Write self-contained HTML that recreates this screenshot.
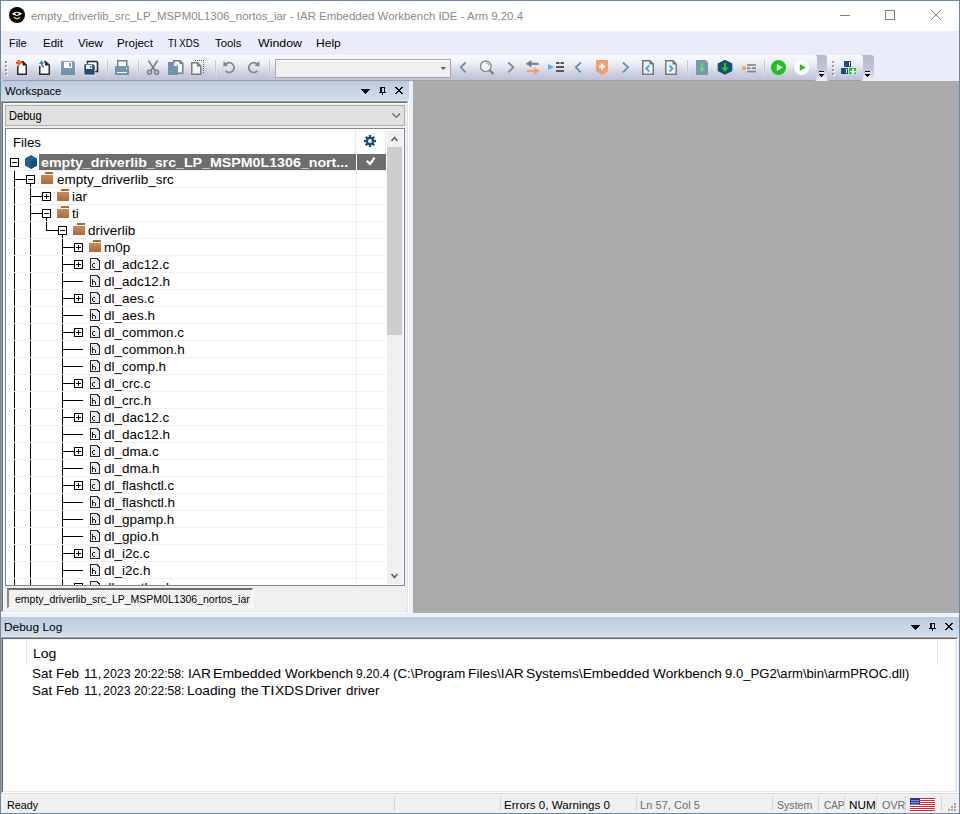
<!DOCTYPE html><html><head><meta charset="utf-8"><style>
html,body{margin:0;padding:0;width:960px;height:814px;overflow:hidden;position:relative;font-family:"Liberation Sans",sans-serif}
div{position:absolute}
.t{white-space:nowrap;line-height:normal}
body>svg{position:absolute;left:0;top:0}
</style></head><body>
<div style="left:0px;top:0px;width:960px;height:814px;background:#6b88a5"></div>
<div style="left:1px;top:1px;width:958px;height:30px;background:#ffffff"></div>
<div style="left:1px;top:31px;width:958px;height:50px;background:#eaedf9"></div>
<div style="left:1px;top:81px;width:958px;height:732px;background:#eef0fa"></div>
<div class="t" style="left:30.50px;top:9.59px;font-size:11.5px;color:#8a8a8a;font-weight:normal;letter-spacing:0px;transform:scaleX(0.9949);transform-origin:0 0;">empty_driverlib_src_LP_MSPM0L1306_nortos_iar - IAR Embedded Workbench IDE - Arm 9.20.4</div>
<div class="t" style="left:9.29px;top:36.59px;font-size:11.5px;color:#000;font-weight:normal;letter-spacing:0px;transform:scaleX(0.9493);transform-origin:0 0;">File</div>
<div class="t" style="left:42.50px;top:36.59px;font-size:11.5px;color:#000;font-weight:normal;letter-spacing:0px;transform:scaleX(1.0013);transform-origin:0 0;">Edit</div>
<div class="t" style="left:78.42px;top:36.59px;font-size:11.5px;color:#000;font-weight:normal;letter-spacing:0px;transform:scaleX(1.0017);transform-origin:0 0;">View</div>
<div class="t" style="left:117.10px;top:36.59px;font-size:11.5px;color:#000;font-weight:normal;letter-spacing:0px;transform:scaleX(1.0009);transform-origin:0 0;">Project</div>
<div class="t" style="left:168.25px;top:36.59px;font-size:11.5px;color:#000;font-weight:normal;letter-spacing:0px;transform:scaleX(0.8387);transform-origin:0 0;">TI XDS</div>
<div class="t" style="left:215.19px;top:36.59px;font-size:11.5px;color:#000;font-weight:normal;letter-spacing:0px;transform:scaleX(0.9816);transform-origin:0 0;">Tools</div>
<div class="t" style="left:257.88px;top:36.59px;font-size:11.5px;color:#000;font-weight:normal;letter-spacing:0px;transform:scaleX(1.0736);transform-origin:0 0;">Window</div>
<div class="t" style="left:316.23px;top:36.59px;font-size:11.5px;color:#000;font-weight:normal;letter-spacing:0px;transform:scaleX(1.0464);transform-origin:0 0;">Help</div>
<div style="left:812px;top:55px;width:15px;height:26px;background:linear-gradient(#b5b8cc,#c3c6d8 55%,#d9dbe7 80%,#eceef5 95%);border-radius:0 3px 3px 0"></div>
<div style="left:1px;top:55px;width:816px;height:26px;background:linear-gradient(#fafbfe,#eff1f8 30%,#cdd0e1 70%,#bfc2d5 96%,#9a9db4 96%);border-radius:3px"></div>
<div style="left:859px;top:55px;width:15px;height:26px;background:linear-gradient(#b5b8cc,#c3c6d8 55%,#d9dbe7 80%,#eceef5 95%);border-radius:0 3px 3px 0"></div>
<div style="left:827px;top:55px;width:36px;height:26px;background:linear-gradient(#fafbfe,#eff1f8 30%,#cdd0e1 70%,#bfc2d5 96%,#9a9db4 96%);border-radius:3px"></div>
<div style="left:1px;top:81px;width:408px;height:20px;background:linear-gradient(#bccbdc,#d3dfec)"></div>
<div class="t" style="left:5.47px;top:84.59px;font-size:11.5px;color:#000;font-weight:normal;letter-spacing:0px;transform:scaleX(0.9835);transform-origin:0 0;">Workspace</div>
<div style="left:1px;top:103px;width:407px;height:509px;background:#f0f0f0"></div>
<div style="left:5px;top:105px;width:400px;height:21px;background:#e1e1e1;border:1px solid #adadad;box-sizing:border-box"></div>
<div class="t" style="left:8.57px;top:108.23px;font-size:13px;color:#000;font-weight:normal;letter-spacing:0px;transform:scaleX(0.8523);transform-origin:0 0;">Debug</div>
<div style="left:5px;top:128px;width:400px;height:458px;background:#fff;border:1px solid #7d8894;box-sizing:border-box"></div>
<div style="left:6px;top:129px;width:398px;height:456px;overflow:hidden"><svg width="398" height="456" style="position:absolute;left:0;top:0"><defs><linearGradient id="fold" x1="0" y1="0" x2="0" y2="1"><stop offset="0" stop-color="#c98d5c"/><stop offset="1" stop-color="#a9693d"/></linearGradient></defs><g transform="translate(-6,-129)"><rect x="39" y="154" width="317" height="16" fill="#6e6e6e"/><rect x="357" y="154" width="29" height="16" fill="#6e6e6e"/><rect x="14" y="171" width="1" height="414" fill="#000"/><rect x="30" y="184" width="1" height="401" fill="#000"/><rect x="46" y="218" width="1" height="13" fill="#000"/><rect x="62" y="235" width="1" height="350" fill="#000"/><rect x="10.5" y="158.5" width="8" height="8" fill="#fff" stroke="#000" stroke-width="1"/><rect x="12" y="162" width="5" height="1" fill="#000"/><g transform="translate(25,155)"><path d="M6 0 L12 3.5 L12 10.5 L6 14 L0 10.5 L0 3.5 Z" fill="#245f8c"/><path d="M6 7 L12 3.5 L12 10.5 L6 14 Z" fill="#1b4b70"/></g><rect x="14" y="179" width="12" height="1" fill="#000"/><rect x="26.5" y="175.5" width="8" height="8" fill="#fff" stroke="#000" stroke-width="1"/><rect x="28" y="179" width="5" height="1" fill="#000"/><g transform="translate(41,172)"><rect x="4" y="0" width="8" height="2" fill="#b5672f"/><rect x="0" y="3" width="12" height="9" fill="url(#fold)"/></g><rect x="30" y="196" width="12" height="1" fill="#000"/><rect x="42.5" y="192.5" width="8" height="8" fill="#fff" stroke="#000" stroke-width="1"/><rect x="44" y="196" width="5" height="1" fill="#000"/><rect x="46" y="194" width="1" height="5" fill="#000"/><g transform="translate(57,189)"><rect x="4" y="0" width="8" height="2" fill="#b5672f"/><rect x="0" y="3" width="12" height="9" fill="url(#fold)"/></g><rect x="30" y="213" width="12" height="1" fill="#000"/><rect x="42.5" y="209.5" width="8" height="8" fill="#fff" stroke="#000" stroke-width="1"/><rect x="44" y="213" width="5" height="1" fill="#000"/><g transform="translate(57,206)"><rect x="4" y="0" width="8" height="2" fill="#b5672f"/><rect x="0" y="3" width="12" height="9" fill="url(#fold)"/></g><rect x="46" y="230" width="12" height="1" fill="#000"/><rect x="58.5" y="226.5" width="8" height="8" fill="#fff" stroke="#000" stroke-width="1"/><rect x="60" y="230" width="5" height="1" fill="#000"/><g transform="translate(73,223)"><rect x="4" y="0" width="8" height="2" fill="#b5672f"/><rect x="0" y="3" width="12" height="9" fill="url(#fold)"/></g><rect x="62" y="247" width="12" height="1" fill="#000"/><rect x="74.5" y="243.5" width="8" height="8" fill="#fff" stroke="#000" stroke-width="1"/><rect x="76" y="247" width="5" height="1" fill="#000"/><rect x="78" y="245" width="1" height="5" fill="#000"/><g transform="translate(89,240)"><rect x="4" y="0" width="8" height="2" fill="#b5672f"/><rect x="0" y="3" width="12" height="9" fill="url(#fold)"/></g><rect x="62" y="264" width="12" height="1" fill="#000"/><rect x="74.5" y="260.5" width="8" height="8" fill="#fff" stroke="#000" stroke-width="1"/><rect x="76" y="264" width="5" height="1" fill="#000"/><rect x="78" y="262" width="1" height="5" fill="#000"/><g transform="translate(90,258)" shape-rendering="crispEdges"><rect x="1" y="1" width="8" height="10" fill="#e3edf7"/><rect x="1" y="1" width="1" height="10" fill="#f3f7fb"/><rect x="0" y="0" width="8" height="1" fill="#2a2a2a"/><rect x="0" y="0" width="1" height="12" fill="#2a2a2a"/><rect x="0" y="11" width="10" height="1" fill="#2a2a2a"/><rect x="9" y="2" width="1" height="10" fill="#2a2a2a"/><rect x="7" y="1" width="2" height="1" fill="#2a2a2a"/><rect x="8" y="2" width="1" height="1" fill="#2a2a2a"/><rect x="3" y="5" width="2" height="1" fill="#222"/><rect x="2" y="6" width="1" height="3" fill="#222"/><rect x="3" y="9" width="2" height="1" fill="#222"/></g><rect x="62" y="281" width="21" height="1" fill="#000"/><g transform="translate(90,275)" shape-rendering="crispEdges"><rect x="1" y="1" width="8" height="10" fill="#e3edf7"/><rect x="1" y="1" width="1" height="10" fill="#f3f7fb"/><rect x="0" y="0" width="8" height="1" fill="#2a2a2a"/><rect x="0" y="0" width="1" height="12" fill="#2a2a2a"/><rect x="0" y="11" width="10" height="1" fill="#2a2a2a"/><rect x="9" y="2" width="1" height="10" fill="#2a2a2a"/><rect x="7" y="1" width="2" height="1" fill="#2a2a2a"/><rect x="8" y="2" width="1" height="1" fill="#2a2a2a"/><rect x="2" y="4" width="1" height="6" fill="#222"/><rect x="3" y="6" width="2" height="1" fill="#222"/><rect x="5" y="7" width="1" height="3" fill="#222"/></g><rect x="62" y="298" width="12" height="1" fill="#000"/><rect x="74.5" y="294.5" width="8" height="8" fill="#fff" stroke="#000" stroke-width="1"/><rect x="76" y="298" width="5" height="1" fill="#000"/><rect x="78" y="296" width="1" height="5" fill="#000"/><g transform="translate(90,292)" shape-rendering="crispEdges"><rect x="1" y="1" width="8" height="10" fill="#e3edf7"/><rect x="1" y="1" width="1" height="10" fill="#f3f7fb"/><rect x="0" y="0" width="8" height="1" fill="#2a2a2a"/><rect x="0" y="0" width="1" height="12" fill="#2a2a2a"/><rect x="0" y="11" width="10" height="1" fill="#2a2a2a"/><rect x="9" y="2" width="1" height="10" fill="#2a2a2a"/><rect x="7" y="1" width="2" height="1" fill="#2a2a2a"/><rect x="8" y="2" width="1" height="1" fill="#2a2a2a"/><rect x="3" y="5" width="2" height="1" fill="#222"/><rect x="2" y="6" width="1" height="3" fill="#222"/><rect x="3" y="9" width="2" height="1" fill="#222"/></g><rect x="62" y="315" width="21" height="1" fill="#000"/><g transform="translate(90,309)" shape-rendering="crispEdges"><rect x="1" y="1" width="8" height="10" fill="#e3edf7"/><rect x="1" y="1" width="1" height="10" fill="#f3f7fb"/><rect x="0" y="0" width="8" height="1" fill="#2a2a2a"/><rect x="0" y="0" width="1" height="12" fill="#2a2a2a"/><rect x="0" y="11" width="10" height="1" fill="#2a2a2a"/><rect x="9" y="2" width="1" height="10" fill="#2a2a2a"/><rect x="7" y="1" width="2" height="1" fill="#2a2a2a"/><rect x="8" y="2" width="1" height="1" fill="#2a2a2a"/><rect x="2" y="4" width="1" height="6" fill="#222"/><rect x="3" y="6" width="2" height="1" fill="#222"/><rect x="5" y="7" width="1" height="3" fill="#222"/></g><rect x="62" y="332" width="12" height="1" fill="#000"/><rect x="74.5" y="328.5" width="8" height="8" fill="#fff" stroke="#000" stroke-width="1"/><rect x="76" y="332" width="5" height="1" fill="#000"/><rect x="78" y="330" width="1" height="5" fill="#000"/><g transform="translate(90,326)" shape-rendering="crispEdges"><rect x="1" y="1" width="8" height="10" fill="#e3edf7"/><rect x="1" y="1" width="1" height="10" fill="#f3f7fb"/><rect x="0" y="0" width="8" height="1" fill="#2a2a2a"/><rect x="0" y="0" width="1" height="12" fill="#2a2a2a"/><rect x="0" y="11" width="10" height="1" fill="#2a2a2a"/><rect x="9" y="2" width="1" height="10" fill="#2a2a2a"/><rect x="7" y="1" width="2" height="1" fill="#2a2a2a"/><rect x="8" y="2" width="1" height="1" fill="#2a2a2a"/><rect x="3" y="5" width="2" height="1" fill="#222"/><rect x="2" y="6" width="1" height="3" fill="#222"/><rect x="3" y="9" width="2" height="1" fill="#222"/></g><rect x="62" y="349" width="21" height="1" fill="#000"/><g transform="translate(90,343)" shape-rendering="crispEdges"><rect x="1" y="1" width="8" height="10" fill="#e3edf7"/><rect x="1" y="1" width="1" height="10" fill="#f3f7fb"/><rect x="0" y="0" width="8" height="1" fill="#2a2a2a"/><rect x="0" y="0" width="1" height="12" fill="#2a2a2a"/><rect x="0" y="11" width="10" height="1" fill="#2a2a2a"/><rect x="9" y="2" width="1" height="10" fill="#2a2a2a"/><rect x="7" y="1" width="2" height="1" fill="#2a2a2a"/><rect x="8" y="2" width="1" height="1" fill="#2a2a2a"/><rect x="2" y="4" width="1" height="6" fill="#222"/><rect x="3" y="6" width="2" height="1" fill="#222"/><rect x="5" y="7" width="1" height="3" fill="#222"/></g><rect x="62" y="366" width="21" height="1" fill="#000"/><g transform="translate(90,360)" shape-rendering="crispEdges"><rect x="1" y="1" width="8" height="10" fill="#e3edf7"/><rect x="1" y="1" width="1" height="10" fill="#f3f7fb"/><rect x="0" y="0" width="8" height="1" fill="#2a2a2a"/><rect x="0" y="0" width="1" height="12" fill="#2a2a2a"/><rect x="0" y="11" width="10" height="1" fill="#2a2a2a"/><rect x="9" y="2" width="1" height="10" fill="#2a2a2a"/><rect x="7" y="1" width="2" height="1" fill="#2a2a2a"/><rect x="8" y="2" width="1" height="1" fill="#2a2a2a"/><rect x="2" y="4" width="1" height="6" fill="#222"/><rect x="3" y="6" width="2" height="1" fill="#222"/><rect x="5" y="7" width="1" height="3" fill="#222"/></g><rect x="62" y="383" width="12" height="1" fill="#000"/><rect x="74.5" y="379.5" width="8" height="8" fill="#fff" stroke="#000" stroke-width="1"/><rect x="76" y="383" width="5" height="1" fill="#000"/><rect x="78" y="381" width="1" height="5" fill="#000"/><g transform="translate(90,377)" shape-rendering="crispEdges"><rect x="1" y="1" width="8" height="10" fill="#e3edf7"/><rect x="1" y="1" width="1" height="10" fill="#f3f7fb"/><rect x="0" y="0" width="8" height="1" fill="#2a2a2a"/><rect x="0" y="0" width="1" height="12" fill="#2a2a2a"/><rect x="0" y="11" width="10" height="1" fill="#2a2a2a"/><rect x="9" y="2" width="1" height="10" fill="#2a2a2a"/><rect x="7" y="1" width="2" height="1" fill="#2a2a2a"/><rect x="8" y="2" width="1" height="1" fill="#2a2a2a"/><rect x="3" y="5" width="2" height="1" fill="#222"/><rect x="2" y="6" width="1" height="3" fill="#222"/><rect x="3" y="9" width="2" height="1" fill="#222"/></g><rect x="62" y="400" width="21" height="1" fill="#000"/><g transform="translate(90,394)" shape-rendering="crispEdges"><rect x="1" y="1" width="8" height="10" fill="#e3edf7"/><rect x="1" y="1" width="1" height="10" fill="#f3f7fb"/><rect x="0" y="0" width="8" height="1" fill="#2a2a2a"/><rect x="0" y="0" width="1" height="12" fill="#2a2a2a"/><rect x="0" y="11" width="10" height="1" fill="#2a2a2a"/><rect x="9" y="2" width="1" height="10" fill="#2a2a2a"/><rect x="7" y="1" width="2" height="1" fill="#2a2a2a"/><rect x="8" y="2" width="1" height="1" fill="#2a2a2a"/><rect x="2" y="4" width="1" height="6" fill="#222"/><rect x="3" y="6" width="2" height="1" fill="#222"/><rect x="5" y="7" width="1" height="3" fill="#222"/></g><rect x="62" y="417" width="12" height="1" fill="#000"/><rect x="74.5" y="413.5" width="8" height="8" fill="#fff" stroke="#000" stroke-width="1"/><rect x="76" y="417" width="5" height="1" fill="#000"/><rect x="78" y="415" width="1" height="5" fill="#000"/><g transform="translate(90,411)" shape-rendering="crispEdges"><rect x="1" y="1" width="8" height="10" fill="#e3edf7"/><rect x="1" y="1" width="1" height="10" fill="#f3f7fb"/><rect x="0" y="0" width="8" height="1" fill="#2a2a2a"/><rect x="0" y="0" width="1" height="12" fill="#2a2a2a"/><rect x="0" y="11" width="10" height="1" fill="#2a2a2a"/><rect x="9" y="2" width="1" height="10" fill="#2a2a2a"/><rect x="7" y="1" width="2" height="1" fill="#2a2a2a"/><rect x="8" y="2" width="1" height="1" fill="#2a2a2a"/><rect x="3" y="5" width="2" height="1" fill="#222"/><rect x="2" y="6" width="1" height="3" fill="#222"/><rect x="3" y="9" width="2" height="1" fill="#222"/></g><rect x="62" y="434" width="21" height="1" fill="#000"/><g transform="translate(90,428)" shape-rendering="crispEdges"><rect x="1" y="1" width="8" height="10" fill="#e3edf7"/><rect x="1" y="1" width="1" height="10" fill="#f3f7fb"/><rect x="0" y="0" width="8" height="1" fill="#2a2a2a"/><rect x="0" y="0" width="1" height="12" fill="#2a2a2a"/><rect x="0" y="11" width="10" height="1" fill="#2a2a2a"/><rect x="9" y="2" width="1" height="10" fill="#2a2a2a"/><rect x="7" y="1" width="2" height="1" fill="#2a2a2a"/><rect x="8" y="2" width="1" height="1" fill="#2a2a2a"/><rect x="2" y="4" width="1" height="6" fill="#222"/><rect x="3" y="6" width="2" height="1" fill="#222"/><rect x="5" y="7" width="1" height="3" fill="#222"/></g><rect x="62" y="451" width="12" height="1" fill="#000"/><rect x="74.5" y="447.5" width="8" height="8" fill="#fff" stroke="#000" stroke-width="1"/><rect x="76" y="451" width="5" height="1" fill="#000"/><rect x="78" y="449" width="1" height="5" fill="#000"/><g transform="translate(90,445)" shape-rendering="crispEdges"><rect x="1" y="1" width="8" height="10" fill="#e3edf7"/><rect x="1" y="1" width="1" height="10" fill="#f3f7fb"/><rect x="0" y="0" width="8" height="1" fill="#2a2a2a"/><rect x="0" y="0" width="1" height="12" fill="#2a2a2a"/><rect x="0" y="11" width="10" height="1" fill="#2a2a2a"/><rect x="9" y="2" width="1" height="10" fill="#2a2a2a"/><rect x="7" y="1" width="2" height="1" fill="#2a2a2a"/><rect x="8" y="2" width="1" height="1" fill="#2a2a2a"/><rect x="3" y="5" width="2" height="1" fill="#222"/><rect x="2" y="6" width="1" height="3" fill="#222"/><rect x="3" y="9" width="2" height="1" fill="#222"/></g><rect x="62" y="468" width="21" height="1" fill="#000"/><g transform="translate(90,462)" shape-rendering="crispEdges"><rect x="1" y="1" width="8" height="10" fill="#e3edf7"/><rect x="1" y="1" width="1" height="10" fill="#f3f7fb"/><rect x="0" y="0" width="8" height="1" fill="#2a2a2a"/><rect x="0" y="0" width="1" height="12" fill="#2a2a2a"/><rect x="0" y="11" width="10" height="1" fill="#2a2a2a"/><rect x="9" y="2" width="1" height="10" fill="#2a2a2a"/><rect x="7" y="1" width="2" height="1" fill="#2a2a2a"/><rect x="8" y="2" width="1" height="1" fill="#2a2a2a"/><rect x="2" y="4" width="1" height="6" fill="#222"/><rect x="3" y="6" width="2" height="1" fill="#222"/><rect x="5" y="7" width="1" height="3" fill="#222"/></g><rect x="62" y="485" width="12" height="1" fill="#000"/><rect x="74.5" y="481.5" width="8" height="8" fill="#fff" stroke="#000" stroke-width="1"/><rect x="76" y="485" width="5" height="1" fill="#000"/><rect x="78" y="483" width="1" height="5" fill="#000"/><g transform="translate(90,479)" shape-rendering="crispEdges"><rect x="1" y="1" width="8" height="10" fill="#e3edf7"/><rect x="1" y="1" width="1" height="10" fill="#f3f7fb"/><rect x="0" y="0" width="8" height="1" fill="#2a2a2a"/><rect x="0" y="0" width="1" height="12" fill="#2a2a2a"/><rect x="0" y="11" width="10" height="1" fill="#2a2a2a"/><rect x="9" y="2" width="1" height="10" fill="#2a2a2a"/><rect x="7" y="1" width="2" height="1" fill="#2a2a2a"/><rect x="8" y="2" width="1" height="1" fill="#2a2a2a"/><rect x="3" y="5" width="2" height="1" fill="#222"/><rect x="2" y="6" width="1" height="3" fill="#222"/><rect x="3" y="9" width="2" height="1" fill="#222"/></g><rect x="62" y="502" width="21" height="1" fill="#000"/><g transform="translate(90,496)" shape-rendering="crispEdges"><rect x="1" y="1" width="8" height="10" fill="#e3edf7"/><rect x="1" y="1" width="1" height="10" fill="#f3f7fb"/><rect x="0" y="0" width="8" height="1" fill="#2a2a2a"/><rect x="0" y="0" width="1" height="12" fill="#2a2a2a"/><rect x="0" y="11" width="10" height="1" fill="#2a2a2a"/><rect x="9" y="2" width="1" height="10" fill="#2a2a2a"/><rect x="7" y="1" width="2" height="1" fill="#2a2a2a"/><rect x="8" y="2" width="1" height="1" fill="#2a2a2a"/><rect x="2" y="4" width="1" height="6" fill="#222"/><rect x="3" y="6" width="2" height="1" fill="#222"/><rect x="5" y="7" width="1" height="3" fill="#222"/></g><rect x="62" y="519" width="21" height="1" fill="#000"/><g transform="translate(90,513)" shape-rendering="crispEdges"><rect x="1" y="1" width="8" height="10" fill="#e3edf7"/><rect x="1" y="1" width="1" height="10" fill="#f3f7fb"/><rect x="0" y="0" width="8" height="1" fill="#2a2a2a"/><rect x="0" y="0" width="1" height="12" fill="#2a2a2a"/><rect x="0" y="11" width="10" height="1" fill="#2a2a2a"/><rect x="9" y="2" width="1" height="10" fill="#2a2a2a"/><rect x="7" y="1" width="2" height="1" fill="#2a2a2a"/><rect x="8" y="2" width="1" height="1" fill="#2a2a2a"/><rect x="2" y="4" width="1" height="6" fill="#222"/><rect x="3" y="6" width="2" height="1" fill="#222"/><rect x="5" y="7" width="1" height="3" fill="#222"/></g><rect x="62" y="536" width="21" height="1" fill="#000"/><g transform="translate(90,530)" shape-rendering="crispEdges"><rect x="1" y="1" width="8" height="10" fill="#e3edf7"/><rect x="1" y="1" width="1" height="10" fill="#f3f7fb"/><rect x="0" y="0" width="8" height="1" fill="#2a2a2a"/><rect x="0" y="0" width="1" height="12" fill="#2a2a2a"/><rect x="0" y="11" width="10" height="1" fill="#2a2a2a"/><rect x="9" y="2" width="1" height="10" fill="#2a2a2a"/><rect x="7" y="1" width="2" height="1" fill="#2a2a2a"/><rect x="8" y="2" width="1" height="1" fill="#2a2a2a"/><rect x="2" y="4" width="1" height="6" fill="#222"/><rect x="3" y="6" width="2" height="1" fill="#222"/><rect x="5" y="7" width="1" height="3" fill="#222"/></g><rect x="62" y="553" width="12" height="1" fill="#000"/><rect x="74.5" y="549.5" width="8" height="8" fill="#fff" stroke="#000" stroke-width="1"/><rect x="76" y="553" width="5" height="1" fill="#000"/><rect x="78" y="551" width="1" height="5" fill="#000"/><g transform="translate(90,547)" shape-rendering="crispEdges"><rect x="1" y="1" width="8" height="10" fill="#e3edf7"/><rect x="1" y="1" width="1" height="10" fill="#f3f7fb"/><rect x="0" y="0" width="8" height="1" fill="#2a2a2a"/><rect x="0" y="0" width="1" height="12" fill="#2a2a2a"/><rect x="0" y="11" width="10" height="1" fill="#2a2a2a"/><rect x="9" y="2" width="1" height="10" fill="#2a2a2a"/><rect x="7" y="1" width="2" height="1" fill="#2a2a2a"/><rect x="8" y="2" width="1" height="1" fill="#2a2a2a"/><rect x="3" y="5" width="2" height="1" fill="#222"/><rect x="2" y="6" width="1" height="3" fill="#222"/><rect x="3" y="9" width="2" height="1" fill="#222"/></g><rect x="62" y="570" width="21" height="1" fill="#000"/><g transform="translate(90,564)" shape-rendering="crispEdges"><rect x="1" y="1" width="8" height="10" fill="#e3edf7"/><rect x="1" y="1" width="1" height="10" fill="#f3f7fb"/><rect x="0" y="0" width="8" height="1" fill="#2a2a2a"/><rect x="0" y="0" width="1" height="12" fill="#2a2a2a"/><rect x="0" y="11" width="10" height="1" fill="#2a2a2a"/><rect x="9" y="2" width="1" height="10" fill="#2a2a2a"/><rect x="7" y="1" width="2" height="1" fill="#2a2a2a"/><rect x="8" y="2" width="1" height="1" fill="#2a2a2a"/><rect x="2" y="4" width="1" height="6" fill="#222"/><rect x="3" y="6" width="2" height="1" fill="#222"/><rect x="5" y="7" width="1" height="3" fill="#222"/></g><rect x="62" y="587" width="12" height="1" fill="#000"/><rect x="74.5" y="583.5" width="8" height="8" fill="#fff" stroke="#000" stroke-width="1"/><rect x="76" y="587" width="5" height="1" fill="#000"/><rect x="78" y="585" width="1" height="5" fill="#000"/><g transform="translate(90,581)" shape-rendering="crispEdges"><rect x="1" y="1" width="8" height="10" fill="#e3edf7"/><rect x="1" y="1" width="1" height="10" fill="#f3f7fb"/><rect x="0" y="0" width="8" height="1" fill="#2a2a2a"/><rect x="0" y="0" width="1" height="12" fill="#2a2a2a"/><rect x="0" y="11" width="10" height="1" fill="#2a2a2a"/><rect x="9" y="2" width="1" height="10" fill="#2a2a2a"/><rect x="7" y="1" width="2" height="1" fill="#2a2a2a"/><rect x="8" y="2" width="1" height="1" fill="#2a2a2a"/><rect x="3" y="5" width="2" height="1" fill="#222"/><rect x="2" y="6" width="1" height="3" fill="#222"/><rect x="3" y="9" width="2" height="1" fill="#222"/></g><rect x="6" y="170" width="380" height="1" fill="#f0f0f0"/><rect x="6" y="187" width="380" height="1" fill="#f0f0f0"/><rect x="6" y="204" width="380" height="1" fill="#f0f0f0"/><rect x="6" y="221" width="380" height="1" fill="#f0f0f0"/><rect x="6" y="238" width="380" height="1" fill="#f0f0f0"/><rect x="6" y="255" width="380" height="1" fill="#f0f0f0"/><rect x="6" y="272" width="380" height="1" fill="#f0f0f0"/><rect x="6" y="289" width="380" height="1" fill="#f0f0f0"/><rect x="6" y="306" width="380" height="1" fill="#f0f0f0"/><rect x="6" y="323" width="380" height="1" fill="#f0f0f0"/><rect x="6" y="340" width="380" height="1" fill="#f0f0f0"/><rect x="6" y="357" width="380" height="1" fill="#f0f0f0"/><rect x="6" y="374" width="380" height="1" fill="#f0f0f0"/><rect x="6" y="391" width="380" height="1" fill="#f0f0f0"/><rect x="6" y="408" width="380" height="1" fill="#f0f0f0"/><rect x="6" y="425" width="380" height="1" fill="#f0f0f0"/><rect x="6" y="442" width="380" height="1" fill="#f0f0f0"/><rect x="6" y="459" width="380" height="1" fill="#f0f0f0"/><rect x="6" y="476" width="380" height="1" fill="#f0f0f0"/><rect x="6" y="493" width="380" height="1" fill="#f0f0f0"/><rect x="6" y="510" width="380" height="1" fill="#f0f0f0"/><rect x="6" y="527" width="380" height="1" fill="#f0f0f0"/><rect x="6" y="544" width="380" height="1" fill="#f0f0f0"/><rect x="6" y="561" width="380" height="1" fill="#f0f0f0"/><rect x="6" y="578" width="380" height="1" fill="#f0f0f0"/><rect x="6" y="595" width="380" height="1" fill="#f0f0f0"/><rect x="355" y="130" width="1" height="24" fill="#e8e8e8"/><rect x="356" y="170" width="1" height="415" fill="#ececec"/><rect x="385" y="130" width="1" height="24" fill="#e8e8e8"/><g transform="translate(370,141)"><g fill="#1c5078"><circle r="4.2"/><rect x="-1.2" y="-6" width="2.4" height="12"/><rect x="-6" y="-1.2" width="12" height="2.4"/><rect x="-1.2" y="-6" width="2.4" height="12" transform="rotate(45)"/><rect x="-6" y="-1.2" width="12" height="2.4" transform="rotate(45)"/></g><circle r="1.9" fill="#fff"/></g><path d="M367.5 161.5 L370 164 L374 158.5" stroke="#fff" stroke-width="2.2" fill="none" stroke-linecap="square"/><rect x="387" y="130" width="16" height="454" fill="#f0f0f0"/><rect x="387" y="147" width="15" height="188" fill="#cdcdcd"/><path d="M391.5 141 L394.5 137.5 L397.5 141" stroke="#606060" stroke-width="1.6" fill="none"/><path d="M391.5 574 L394.5 577.5 L397.5 574" stroke="#606060" stroke-width="1.6" fill="none"/></g></svg><div class="t" style="left:41.00px;top:155.24px;font-size:13px;color:#fff;font-weight:bold;letter-spacing:0px;transform:scaleX(1.0929);transform-origin:0 0;margin-left:-6px;margin-top:-129px">empty_driverlib_src_LP_MSPM0L1306_nort...</div><div class="t" style="left:56.99px;top:172.24px;font-size:13px;color:#000;font-weight:normal;letter-spacing:0px;transform:scaleX(1.0355);transform-origin:0 0;margin-left:-6px;margin-top:-129px">empty_driverlib_src</div><div class="t" style="left:72.39px;top:189.24px;font-size:13px;color:#000;font-weight:normal;letter-spacing:0px;margin-left:-6px;margin-top:-129px;transform:scaleX(1.0355);transform-origin:0 0">iar</div><div class="t" style="left:72.39px;top:206.24px;font-size:13px;color:#000;font-weight:normal;letter-spacing:0px;margin-left:-6px;margin-top:-129px;transform:scaleX(1.0355);transform-origin:0 0">ti</div><div class="t" style="left:88.39px;top:223.24px;font-size:13px;color:#000;font-weight:normal;letter-spacing:0px;margin-left:-6px;margin-top:-129px;transform:scaleX(1.0355);transform-origin:0 0">driverlib</div><div class="t" style="left:104.39px;top:240.24px;font-size:13px;color:#000;font-weight:normal;letter-spacing:0px;margin-left:-6px;margin-top:-129px;transform:scaleX(1.0355);transform-origin:0 0">m0p</div><div class="t" style="left:104.39px;top:257.24px;font-size:13px;color:#000;font-weight:normal;letter-spacing:0px;margin-left:-6px;margin-top:-129px;transform:scaleX(1.0355);transform-origin:0 0">dl_adc12.c</div><div class="t" style="left:104.39px;top:274.24px;font-size:13px;color:#000;font-weight:normal;letter-spacing:0px;margin-left:-6px;margin-top:-129px;transform:scaleX(1.0355);transform-origin:0 0">dl_adc12.h</div><div class="t" style="left:104.39px;top:291.24px;font-size:13px;color:#000;font-weight:normal;letter-spacing:0px;margin-left:-6px;margin-top:-129px;transform:scaleX(1.0355);transform-origin:0 0">dl_aes.c</div><div class="t" style="left:104.39px;top:308.24px;font-size:13px;color:#000;font-weight:normal;letter-spacing:0px;margin-left:-6px;margin-top:-129px;transform:scaleX(1.0355);transform-origin:0 0">dl_aes.h</div><div class="t" style="left:104.39px;top:325.24px;font-size:13px;color:#000;font-weight:normal;letter-spacing:0px;margin-left:-6px;margin-top:-129px;transform:scaleX(1.0355);transform-origin:0 0">dl_common.c</div><div class="t" style="left:104.39px;top:342.24px;font-size:13px;color:#000;font-weight:normal;letter-spacing:0px;margin-left:-6px;margin-top:-129px;transform:scaleX(1.0355);transform-origin:0 0">dl_common.h</div><div class="t" style="left:104.39px;top:359.24px;font-size:13px;color:#000;font-weight:normal;letter-spacing:0px;margin-left:-6px;margin-top:-129px;transform:scaleX(1.0355);transform-origin:0 0">dl_comp.h</div><div class="t" style="left:104.39px;top:376.24px;font-size:13px;color:#000;font-weight:normal;letter-spacing:0px;margin-left:-6px;margin-top:-129px;transform:scaleX(1.0355);transform-origin:0 0">dl_crc.c</div><div class="t" style="left:104.39px;top:393.24px;font-size:13px;color:#000;font-weight:normal;letter-spacing:0px;margin-left:-6px;margin-top:-129px;transform:scaleX(1.0355);transform-origin:0 0">dl_crc.h</div><div class="t" style="left:104.39px;top:410.24px;font-size:13px;color:#000;font-weight:normal;letter-spacing:0px;margin-left:-6px;margin-top:-129px;transform:scaleX(1.0355);transform-origin:0 0">dl_dac12.c</div><div class="t" style="left:104.39px;top:427.24px;font-size:13px;color:#000;font-weight:normal;letter-spacing:0px;margin-left:-6px;margin-top:-129px;transform:scaleX(1.0355);transform-origin:0 0">dl_dac12.h</div><div class="t" style="left:104.39px;top:444.24px;font-size:13px;color:#000;font-weight:normal;letter-spacing:0px;margin-left:-6px;margin-top:-129px;transform:scaleX(1.0355);transform-origin:0 0">dl_dma.c</div><div class="t" style="left:104.39px;top:461.24px;font-size:13px;color:#000;font-weight:normal;letter-spacing:0px;margin-left:-6px;margin-top:-129px;transform:scaleX(1.0355);transform-origin:0 0">dl_dma.h</div><div class="t" style="left:104.39px;top:478.24px;font-size:13px;color:#000;font-weight:normal;letter-spacing:0px;margin-left:-6px;margin-top:-129px;transform:scaleX(1.0355);transform-origin:0 0">dl_flashctl.c</div><div class="t" style="left:104.39px;top:495.24px;font-size:13px;color:#000;font-weight:normal;letter-spacing:0px;margin-left:-6px;margin-top:-129px;transform:scaleX(1.0355);transform-origin:0 0">dl_flashctl.h</div><div class="t" style="left:104.39px;top:512.24px;font-size:13px;color:#000;font-weight:normal;letter-spacing:0px;margin-left:-6px;margin-top:-129px;transform:scaleX(1.0355);transform-origin:0 0">dl_gpamp.h</div><div class="t" style="left:104.39px;top:529.24px;font-size:13px;color:#000;font-weight:normal;letter-spacing:0px;margin-left:-6px;margin-top:-129px;transform:scaleX(1.0355);transform-origin:0 0">dl_gpio.h</div><div class="t" style="left:104.39px;top:546.24px;font-size:13px;color:#000;font-weight:normal;letter-spacing:0px;margin-left:-6px;margin-top:-129px;transform:scaleX(1.0355);transform-origin:0 0">dl_i2c.c</div><div class="t" style="left:104.39px;top:563.24px;font-size:13px;color:#000;font-weight:normal;letter-spacing:0px;margin-left:-6px;margin-top:-129px;transform:scaleX(1.0355);transform-origin:0 0">dl_i2c.h</div><div class="t" style="left:104.39px;top:580.24px;font-size:13px;color:#000;font-weight:normal;letter-spacing:0px;margin-left:-6px;margin-top:-129px;transform:scaleX(1.0355);transform-origin:0 0">dl_mathacl.c</div><div class="t" style="left:12.98px;top:135.24px;font-size:13px;color:#000;font-weight:normal;letter-spacing:0px;transform:scaleX(1.0196);transform-origin:0 0;margin-left:-6px;margin-top:-129px">Files</div></div>
<div style="left:7px;top:588px;width:246px;height:20px;background:repeating-conic-gradient(#fbfbfb 0 25%,#e9e9e9 0 50%) 0 0/2px 2px;border-top:2px solid #6e6e6e;border-left:2px solid #8a8a8a;border-right:1px solid #fff;border-bottom:1px solid #fff;box-sizing:border-box"></div>
<div class="t" style="left:14.50px;top:592.54px;font-size:11px;color:#000;font-weight:normal;letter-spacing:0px;transform:scaleX(0.9550);transform-origin:0 0;">empty_driverlib_src_LP_MSPM0L1306_nortos_iar</div>
<div style="left:413px;top:81px;width:546px;height:532px;background:#ababab"></div>
<div style="left:1px;top:617px;width:958px;height:20px;background:linear-gradient(#bccbdc,#d3dfec)"></div>
<div class="t" style="left:4.48px;top:620.59px;font-size:11.5px;color:#000;font-weight:normal;letter-spacing:0px;transform:scaleX(1.0368);transform-origin:0 0;">Debug Log</div>
<div style="left:1px;top:639px;width:957px;height:153px;background:#f0f0f0"></div>
<div style="left:3px;top:639px;width:954px;height:153px;background:#fff"></div>
<div class="t" style="left:32.72px;top:646.24px;font-size:13px;color:#000;font-weight:normal;letter-spacing:0px;transform:scaleX(1.0773);transform-origin:0 0;">Log</div>
<div class="t" style="left:32.39px;top:666.24px;font-size:13px;color:#000;transform:scaleX(1.0313);transform-origin:0 0">Sat</div>
<div class="t" style="left:55.51px;top:666.24px;font-size:13px;color:#000;transform:scaleX(1.0297);transform-origin:0 0">Feb</div>
<div class="t" style="left:83.65px;top:666.24px;font-size:13px;color:#000;transform:scaleX(1.0144);transform-origin:0 0">11,</div>
<div class="t" style="left:103.35px;top:666.24px;font-size:13px;color:#000;transform:scaleX(0.9547);transform-origin:0 0">2023</div>
<div class="t" style="left:134.38px;top:666.24px;font-size:13px;color:#000;transform:scaleX(0.9286);transform-origin:0 0">20:22:58:</div>
<div class="t" style="left:187.71px;top:666.24px;font-size:13px;color:#000;transform:scaleX(1.0578);transform-origin:0 0">IAR</div>
<div class="t" style="left:212.85px;top:666.24px;font-size:13px;color:#000;transform:scaleX(1.0825);transform-origin:0 0">Embedded</div>
<div class="t" style="left:284.54px;top:666.24px;font-size:13px;color:#000;transform:scaleX(1.0395);transform-origin:0 0">Workbench</div>
<div class="t" style="left:356.43px;top:666.24px;font-size:13px;color:#000;transform:scaleX(0.9278);transform-origin:0 0">9.20.4</div>
<div class="t" style="left:393.17px;top:666.24px;font-size:13px;color:#000;transform:scaleX(1.0214);transform-origin:0 0">(C:\Program</div>
<div class="t" style="left:467.87px;top:666.24px;font-size:13px;color:#000;transform:scaleX(1.0577);transform-origin:0 0">Files\IAR</div>
<div class="t" style="left:525.77px;top:666.24px;font-size:13px;color:#000;transform:scaleX(1.0600);transform-origin:0 0">Systems\Embedded</div>
<div class="t" style="left:652.73px;top:666.24px;font-size:13px;color:#000;transform:scaleX(1.0518);transform-origin:0 0">Workbench</div>
<div class="t" style="left:725.39px;top:666.24px;font-size:13px;color:#000;transform:scaleX(1.0080);transform-origin:0 0">9.0_PG2\arm\bin\armPROC.dll)</div>
<div class="t" style="left:32.39px;top:683.24px;font-size:13px;color:#000;transform:scaleX(1.0313);transform-origin:0 0">Sat</div>
<div class="t" style="left:55.51px;top:683.24px;font-size:13px;color:#000;transform:scaleX(1.0297);transform-origin:0 0">Feb</div>
<div class="t" style="left:83.65px;top:683.24px;font-size:13px;color:#000;transform:scaleX(1.0144);transform-origin:0 0">11,</div>
<div class="t" style="left:103.35px;top:683.24px;font-size:13px;color:#000;transform:scaleX(0.9547);transform-origin:0 0">2023</div>
<div class="t" style="left:134.38px;top:683.24px;font-size:13px;color:#000;transform:scaleX(0.9286);transform-origin:0 0">20:22:58:</div>
<div class="t" style="left:187.47px;top:683.24px;font-size:13px;color:#000;transform:scaleX(1.0551);transform-origin:0 0">Loading</div>
<div class="t" style="left:240.63px;top:683.24px;font-size:13px;color:#000;transform:scaleX(0.9727);transform-origin:0 0">the</div>
<div class="t" style="left:261.26px;top:683.24px;font-size:13px;color:#000;transform:scaleX(1.1728);transform-origin:0 0">TI</div>
<div class="t" style="left:275.29px;top:683.24px;font-size:13px;color:#000;transform:scaleX(1.0642);transform-origin:0 0">XDS</div>
<div class="t" style="left:305.48px;top:683.24px;font-size:13px;color:#000;transform:scaleX(1.0485);transform-origin:0 0">Driver</div>
<div class="t" style="left:345.83px;top:683.24px;font-size:13px;color:#000;transform:scaleX(1.0274);transform-origin:0 0">driver</div>
<div style="left:1px;top:792px;width:958px;height:21px;background:#f0f0f0;border-top:1px solid #fff;box-sizing:border-box"></div>
<div class="t" style="left:6.51px;top:798.59px;font-size:11.5px;color:#000;font-weight:normal;letter-spacing:0px;transform:scaleX(0.9405);transform-origin:0 0;">Ready</div>
<div class="t" style="left:503.99px;top:798.59px;font-size:11.5px;color:#000;font-weight:normal;letter-spacing:0px;transform:scaleX(1.0097);transform-origin:0 0;">Errors 0, Warnings 0</div>
<div class="t" style="left:640.03px;top:798.59px;font-size:11.5px;color:#6d6d6d;font-weight:normal;letter-spacing:0px;transform:scaleX(0.9670);transform-origin:0 0;">Ln 57, Col 5</div>
<div class="t" style="left:777.08px;top:798.59px;font-size:11.5px;color:#6d6d6d;font-weight:normal;letter-spacing:0px;transform:scaleX(0.9198);transform-origin:0 0;">System</div>
<div class="t" style="left:823.61px;top:798.59px;font-size:11.5px;color:#6d6d6d;font-weight:normal;letter-spacing:0px;transform:scaleX(0.8624);transform-origin:0 0;">CAP</div>
<div class="t" style="left:848.93px;top:798.59px;font-size:11.5px;color:#000;font-weight:normal;letter-spacing:0px;transform:scaleX(1.0204);transform-origin:0 0;">NUM</div>
<div class="t" style="left:881.54px;top:798.59px;font-size:11.5px;color:#6d6d6d;font-weight:normal;letter-spacing:0px;transform:scaleX(0.9372);transform-origin:0 0;">OVR</div>
<svg width="960" height="814" viewBox="0 0 960 814">
<g transform="translate(9,7)"><circle cx="8" cy="8" r="8" fill="#000"/><path d="M2.8 6.8 Q8 2.6 13.2 6.8 Q8 11 2.8 6.8 Z" fill="#fff"/><path d="M5.8 6.8 L8 5.4 L10.2 6.8 L8 8.2 Z" fill="#000"/><path d="M5 10.2 Q8 13.2 11 10.2" stroke="#f2d600" stroke-width="1.6" fill="none"/></g>
<rect x="840" y="15" width="10" height="1" fill="#808080"/>
<rect x="885.5" y="10.5" width="9" height="9" fill="none" stroke="#808080" stroke-width="1"/>
<path d="M931 10 L941 20 M941 10 L931 20" stroke="#808080" stroke-width="1"/>
<defs><linearGradient id="sv" x1="0" y1="0" x2="0" y2="1"><stop offset="0" stop-color="#86a3b9"/><stop offset="1" stop-color="#6f8fa8"/></linearGradient></defs>
<rect x="6" y="62" width="2" height="2" fill="#fff"/><rect x="5" y="61" width="2" height="2" fill="#9a9aa4"/>
<rect x="6" y="66" width="2" height="2" fill="#fff"/><rect x="5" y="65" width="2" height="2" fill="#9a9aa4"/>
<rect x="6" y="70" width="2" height="2" fill="#fff"/><rect x="5" y="69" width="2" height="2" fill="#9a9aa4"/>
<rect x="6" y="74" width="2" height="2" fill="#fff"/><rect x="5" y="73" width="2" height="2" fill="#9a9aa4"/>
<rect x="833" y="62" width="2" height="2" fill="#fff"/><rect x="832" y="61" width="2" height="2" fill="#9a9aa4"/>
<rect x="833" y="66" width="2" height="2" fill="#fff"/><rect x="832" y="65" width="2" height="2" fill="#9a9aa4"/>
<rect x="833" y="70" width="2" height="2" fill="#fff"/><rect x="832" y="69" width="2" height="2" fill="#9a9aa4"/>
<rect x="833" y="74" width="2" height="2" fill="#fff"/><rect x="832" y="73" width="2" height="2" fill="#9a9aa4"/>
<rect x="106" y="60" width="3" height="18" fill="#fbfbfe" fill-opacity="0.25"/><rect x="107" y="60" width="1" height="18" fill="#c6c6ca"/>
<rect x="137" y="60" width="3" height="18" fill="#fbfbfe" fill-opacity="0.25"/><rect x="138" y="60" width="1" height="18" fill="#c6c6ca"/>
<rect x="214" y="60" width="3" height="18" fill="#fbfbfe" fill-opacity="0.25"/><rect x="215" y="60" width="1" height="18" fill="#c6c6ca"/>
<rect x="268" y="60" width="3" height="18" fill="#fbfbfe" fill-opacity="0.25"/><rect x="269" y="60" width="1" height="18" fill="#c6c6ca"/>
<rect x="686" y="60" width="3" height="18" fill="#fbfbfe" fill-opacity="0.25"/><rect x="687" y="60" width="1" height="18" fill="#c6c6ca"/>
<rect x="763" y="60" width="3" height="18" fill="#fbfbfe" fill-opacity="0.25"/><rect x="764" y="60" width="1" height="18" fill="#c6c6ca"/>
<path d="M17.75 66 V74.25 H26.25 V65 L23 61.75 H21" fill="#fff" stroke="#2b2b2b" stroke-width="1.5"/><path d="M22.5 61.5 V65.5 H26.5 Z" fill="#2b2b2b"/>
<path d="M16 62.9 H21.5 M18.75 60 V65.8" stroke="#ff5a00" stroke-width="2.2"/>
<path d="M39.75 66 V74.25 H49.25 V65 L45.5 61.75 H44" fill="#fff" stroke="#2b2b2b" stroke-width="1.5"/><path d="M45 61.5 V65.5 H49.5 Z" fill="#2b2b2b"/>
<path d="M43.8 67.3 Q41.5 66 41.5 63" stroke="#1e88d0" stroke-width="1.6" fill="none"/><path d="M39 64 L41.5 60.5 L44 64 Z" fill="#1e88d0"/>
<path d="M61 61 H73.5 L75 62.5 V75 H61 Z" fill="url(#sv)"/><rect x="64" y="62" width="8" height="6" fill="#fff"/><rect x="69" y="63" width="2" height="3.5" fill="#7d9cb3"/>
<path d="M87.5 61.5 H96.5 L97.5 62.5 V71.5 H87.5 Z" fill="#fff" stroke="#2a2a2a" stroke-width="1.6"/>
<path d="M84 64 H93.5 L95 65.5 V75 H84 Z" fill="#1d4f74" stroke="#fff" stroke-width="0.6"/><rect x="86" y="65" width="6.2" height="4" fill="#fff"/><rect x="90.2" y="65.8" width="1.2" height="2.4" fill="#1d4f74"/>
<rect x="117.75" y="60.75" width="9" height="6" fill="#fff" stroke="#7c7c7c" stroke-width="1.5"/><rect x="115" y="66" width="14" height="9" fill="#7195ae"/><rect x="117" y="72" width="10" height="1" fill="#fff"/><rect x="126" y="68" width="1" height="1" fill="#fff"/>
<g stroke="#7b7b7b" stroke-width="1.5" fill="none"><path d="M148.5 60.5 L155 70.5 M157.5 60.5 L151 70.5"/><circle cx="149.5" cy="72.3" r="2"/><circle cx="156.5" cy="72.3" r="2"/></g>
<path d="M173.75 60.75 H180 L182.75 63.5 V73.25 H173.75 Z" fill="#f4f4f8" stroke="#7c7c7c" stroke-width="1.5"/><path d="M179.5 60.5 V64 H183 Z" fill="#7c7c7c"/>
<path d="M168 62 H174 L178 66 V75 H168 Z" fill="#6f93ad"/><path d="M174 62.5 L177.5 66 H174 Z" fill="#fff"/>
<path d="M191.75 62.75 H197.5 L200.75 66 V74.25 H191.75 Z" fill="#f4f4f8" stroke="#7c7c7c" stroke-width="1.5"/><path d="M197 62.5 V66.5 H201 Z" fill="#7c7c7c"/>
<rect x="195" y="60" width="1" height="1" fill="#555"/>
<rect x="197" y="60" width="1" height="1" fill="#555"/>
<rect x="199" y="60" width="1" height="1" fill="#555"/>
<rect x="201" y="60" width="1" height="1" fill="#555"/>
<rect x="203" y="60" width="1" height="1" fill="#555"/>
<rect x="203" y="62" width="1" height="1" fill="#555"/>
<rect x="203" y="64" width="1" height="1" fill="#555"/>
<rect x="203" y="66" width="1" height="1" fill="#555"/>
<rect x="203" y="68" width="1" height="1" fill="#555"/>
<rect x="203" y="70" width="1" height="1" fill="#555"/>
<rect x="203" y="72" width="1" height="1" fill="#555"/>
<g stroke="#858585" stroke-width="1.7" fill="none"><path d="M225.4 64.5 A4.9 4.9 0 1 1 225.4 70.7"/><path d="M257.4 64.5 A4.9 4.9 0 1 0 257.4 70.7"/></g>
<path d="M223.5 61 L228.3 65.6 L223.3 66.4 Z" fill="#858585"/><path d="M259.3 61 L254.5 65.6 L259.5 66.4 Z" fill="#858585"/>
<rect x="275.5" y="59.5" width="175" height="18" fill="#f0f0f0" stroke="#a6a6a6" stroke-width="1"/><rect x="276" y="60" width="174" height="1" fill="#fff"/><path d="M440.5 67 H446 L443.25 70 Z" fill="#606060"/>
<path d="M465.5 62.5 L460.8 67.3 L465.5 72.3" stroke="#6b8ea5" stroke-width="1.8" fill="none"/>
<path d="M508.3 62.5 L513.3 67.3 L508.3 72.3" stroke="#6b8ea5" stroke-width="1.8" fill="none"/>
<path d="M580.8 62.5 L575.8 67.3 L580.8 72.3" stroke="#6b8ea5" stroke-width="1.8" fill="none"/>
<path d="M623 62.5 L628 67.3 L623 72.3" stroke="#6b8ea5" stroke-width="1.8" fill="none"/>
<circle cx="485.8" cy="66.3" r="5.3" fill="#f6f6fa" stroke="#8a8a8a" stroke-width="1.4"/><path d="M489.6 70.2 L493.6 74" stroke="#7a7a7a" stroke-width="2.2"/><path d="M486.5 62.8 A3.5 3.5 0 0 1 489.3 65.6" stroke="#8a8a8a" stroke-width="1" fill="none"/>
<path d="M529 63.8 H538.7" stroke="#808080" stroke-width="2.2"/><path d="M525.5 63.8 L531.5 60 V67.6 Z" fill="#808080"/>
<path d="M527 70.9 H535" stroke="#f0a070" stroke-width="2.2"/><path d="M540 70.9 L534 67 V74.8 Z" fill="#f0a070"/>
<path d="M548 64 L554 67 L548 70 Z" fill="#5aaee0"/><g fill="#555"><rect x="556" y="62" width="3.5" height="2"/><rect x="560.5" y="62" width="3.5" height="2"/><rect x="556" y="66" width="8" height="2"/><rect x="556" y="70" width="8" height="2"/></g>
<path d="M596 60 H608 V71 L602 75.3 L596 71 Z" fill="#f0a070"/><path d="M599 66.5 H605 M602 63.5 V69.5" stroke="#fff" stroke-width="1.8"/>
<path d="M642.75 60.75 H650 L653.25 64 V74.25 H642.75 Z" fill="#f4f4f8" stroke="#777" stroke-width="1.5"/><path d="M649.5 60.5 V64.5 H653.5 Z" fill="#777"/>
<path d="M649.2 65.5 L646.2 68.5 L649.2 71.5" stroke="#4fa6dc" stroke-width="2" fill="none"/>
<path d="M665.75 60.75 H673 L676.25 64 V74.25 H665.75 Z" fill="#f4f4f8" stroke="#777" stroke-width="1.5"/><path d="M672.5 60.5 V64.5 H676.5 Z" fill="#777"/>
<path d="M669.5 65.5 L672.5 68.5 L669.5 71.5" stroke="#4fa6dc" stroke-width="2" fill="none"/>
<path d="M696 60 H705.5 L708 62.5 V75 H696 Z" fill="#7897b0"/><path d="M702 63 V69" stroke="#66dd66" stroke-width="1.8"/><path d="M698.5 68 H705.5 L702 72 Z" fill="#66dd66"/>
<path d="M725 59.8 L732.3 63.5 V71 L725 74.8 L717.7 71 V63.5 Z" fill="#1a4d72"/><path d="M725 63 V69" stroke="#22cc22" stroke-width="2"/><path d="M721.3 67.6 H728.7 L725 72 Z" fill="#22cc22"/>
<circle cx="744" cy="68.1" r="2.1" fill="#f0a070"/><g fill="#808080"><rect x="747" y="64.2" width="9" height="1.6"/><rect x="747" y="67.4" width="3.5" height="1.6"/><rect x="752" y="67.4" width="4" height="1.6"/><rect x="747" y="70.8" width="9" height="1.6"/></g>
<circle cx="778.5" cy="67.5" r="7.6" fill="#1ec31e"/><path d="M776.8 64 L782.8 67.5 L776.8 71 Z" fill="#fff"/>
<circle cx="801.5" cy="67.5" r="7.5" fill="#fff"/><path d="M799.8 64 L805.8 67.5 L799.8 71 Z" fill="#1ec31e"/>
<g shape-rendering="crispEdges"><rect x="819" y="72" width="5" height="1" fill="#fff"/><rect x="819" y="77" width="5" height="1" fill="#fff" fill-opacity="0.6"/><rect x="819" y="71" width="5" height="1" fill="#000"/><rect x="819" y="74" width="5" height="1" fill="#000"/><rect x="820" y="75" width="3" height="1" fill="#000"/><rect x="821" y="76" width="1" height="1" fill="#000"/></g>
<g shape-rendering="crispEdges"><rect x="865" y="72" width="5" height="1" fill="#fff"/><rect x="865" y="77" width="5" height="1" fill="#fff" fill-opacity="0.6"/><rect x="865" y="71" width="5" height="1" fill="#000"/><rect x="865" y="74" width="5" height="1" fill="#000"/><rect x="866" y="75" width="3" height="1" fill="#000"/><rect x="867" y="76" width="1" height="1" fill="#000"/></g>
<rect x="844" y="61" width="7" height="6" fill="#1d4f74"/><rect x="849" y="62" width="1" height="4" fill="#fff"/><rect x="841" y="68" width="7" height="6" fill="#1d4f74"/><rect x="846" y="69" width="1" height="4" fill="#fff"/><rect x="849" y="68" width="7" height="6" fill="#22c322"/><g shape-rendering="crispEdges" fill="#fff"><rect x="852" y="69" width="2" height="3"/><rect x="850" y="71" width="6" height="1"/><rect x="851" y="72" width="4" height="1"/><rect x="852" y="73" width="2" height="1"/></g>
<rect x="26" y="640" width="1" height="25" fill="#e5e5e5" />
<rect x="937" y="640" width="1" height="25" fill="#e5e5e5" />
<g shape-rendering="crispEdges"><rect x="361" y="89" width="9" height="1" fill="#000"/><rect x="362" y="90" width="7" height="1" fill="#000"/><rect x="363" y="91" width="5" height="1" fill="#000"/><rect x="364" y="92" width="3" height="1" fill="#000"/><rect x="365" y="93" width="1" height="1" fill="#000"/><rect x="380" y="87" width="2" height="5" fill="#000"/><rect x="384" y="87" width="1" height="5" fill="#000"/><rect x="380" y="87" width="5" height="1" fill="#000"/><rect x="379" y="92" width="7" height="1" fill="#000"/><rect x="382" y="93" width="1" height="2" fill="#000"/><rect x="395" y="87" width="2" height="1" fill="#000"/><rect x="401" y="87" width="2" height="1" fill="#000"/><rect x="396" y="88" width="2" height="1" fill="#000"/><rect x="400" y="88" width="2" height="1" fill="#000"/><rect x="397" y="89" width="2" height="1" fill="#000"/><rect x="399" y="89" width="2" height="1" fill="#000"/><rect x="398" y="90" width="2" height="1" fill="#000"/><rect x="397" y="91" width="2" height="1" fill="#000"/><rect x="399" y="91" width="2" height="1" fill="#000"/><rect x="396" y="92" width="2" height="1" fill="#000"/><rect x="400" y="92" width="2" height="1" fill="#000"/><rect x="395" y="93" width="2" height="1" fill="#000"/><rect x="401" y="93" width="2" height="1" fill="#000"/></g>
<g shape-rendering="crispEdges"><rect x="911" y="625" width="9" height="1" fill="#000"/><rect x="912" y="626" width="7" height="1" fill="#000"/><rect x="913" y="627" width="5" height="1" fill="#000"/><rect x="914" y="628" width="3" height="1" fill="#000"/><rect x="915" y="629" width="1" height="1" fill="#000"/><rect x="930" y="623" width="2" height="5" fill="#000"/><rect x="934" y="623" width="1" height="5" fill="#000"/><rect x="930" y="623" width="5" height="1" fill="#000"/><rect x="929" y="628" width="7" height="1" fill="#000"/><rect x="932" y="629" width="1" height="2" fill="#000"/><rect x="945" y="623" width="2" height="1" fill="#000"/><rect x="951" y="623" width="2" height="1" fill="#000"/><rect x="946" y="624" width="2" height="1" fill="#000"/><rect x="950" y="624" width="2" height="1" fill="#000"/><rect x="947" y="625" width="2" height="1" fill="#000"/><rect x="949" y="625" width="2" height="1" fill="#000"/><rect x="948" y="626" width="2" height="1" fill="#000"/><rect x="947" y="627" width="2" height="1" fill="#000"/><rect x="949" y="627" width="2" height="1" fill="#000"/><rect x="946" y="628" width="2" height="1" fill="#000"/><rect x="950" y="628" width="2" height="1" fill="#000"/><rect x="945" y="629" width="2" height="1" fill="#000"/><rect x="951" y="629" width="2" height="1" fill="#000"/></g>
<path d="M392.5 113.5 L396.3 117.3 L400.1 113.5" stroke="#505050" stroke-width="1.1" fill="none"/>
<rect x="1" y="100" width="408" height="1" fill="#e2e7f3" />
<rect x="1" y="101" width="407" height="1" fill="#a0a0a0" />
<rect x="1" y="101" width="1" height="511" fill="#a0a0a0" />
<rect x="2" y="102" width="405" height="1" fill="#696969" />
<rect x="2" y="102" width="1" height="509" fill="#696969" />
<rect x="3" y="103" width="404" height="1" fill="#fcfcfc" />
<rect x="3" y="103" width="1" height="508" fill="#fcfcfc" />
<rect x="407" y="102" width="1" height="510" fill="#e3e3e3" />
<rect x="2" y="611" width="406" height="1" fill="#e3e3e3" />
<rect x="408" y="101" width="1" height="512" fill="#ffffff" />
<rect x="1" y="612" width="408" height="1" fill="#ffffff" />
<rect x="1" y="636" width="958" height="1" fill="#e2e7f3" />
<rect x="1" y="637" width="957" height="1" fill="#a0a0a0" />
<rect x="1" y="637" width="1" height="156" fill="#a0a0a0" />
<rect x="2" y="638" width="955" height="1" fill="#696969" />
<rect x="2" y="638" width="1" height="154" fill="#696969" />
<rect x="3" y="639" width="952" height="1" fill="#f0f0f0" />
<rect x="3" y="640" width="1" height="151" fill="#f0f0f0" />
<rect x="955" y="640" width="2" height="151" fill="#e8e8e8" />
<rect x="3" y="791" width="954" height="1" fill="#e6e6e6" />
<rect x="957" y="638" width="1" height="155" fill="#ffffff" />
<rect x="3" y="792" width="955" height="1" fill="#ffffff" />
<rect x="1" y="793" width="958" height="1" fill="#dadada" />
<g shape-rendering="crispEdges">
<rect x="910" y="798" width="25" height="13" fill="#fff"/>
<rect x="910" y="798" width="25" height="1" fill="#d42a2a"/>
<rect x="910" y="800" width="25" height="1" fill="#d42a2a"/>
<rect x="910" y="802" width="25" height="1" fill="#d42a2a"/>
<rect x="910" y="804" width="25" height="1" fill="#d42a2a"/>
<rect x="910" y="806" width="25" height="1" fill="#d42a2a"/>
<rect x="910" y="808" width="25" height="1" fill="#d42a2a"/>
<rect x="910" y="810" width="25" height="1" fill="#d42a2a"/>
<rect x="910" y="798" width="10" height="7" fill="#2a3a9a"/>
<rect x="911" y="800" width="8" height="1" fill="#7f8fd0"/>
<rect x="911" y="802" width="8" height="1" fill="#7f8fd0"/>
<rect x="911" y="804" width="8" height="1" fill="#7f8fd0"/>
</g>
<rect x="954" y="803" width="2" height="2" fill="#a9a9a9" />
<rect x="951" y="806" width="2" height="2" fill="#a9a9a9" />
<rect x="954" y="806" width="2" height="2" fill="#a9a9a9" />
<rect x="948" y="809" width="2" height="2" fill="#a9a9a9" />
<rect x="951" y="809" width="2" height="2" fill="#a9a9a9" />
<rect x="954" y="809" width="2" height="2" fill="#a9a9a9" />
<rect x="394" y="796" width="1" height="15" fill="#d7d7d7" />
<rect x="500" y="796" width="1" height="15" fill="#d7d7d7" />
<rect x="636" y="796" width="1" height="15" fill="#d7d7d7" />
<rect x="772" y="796" width="1" height="15" fill="#d7d7d7" />
<rect x="818" y="796" width="1" height="15" fill="#d7d7d7" />
<rect x="844" y="796" width="1" height="15" fill="#d7d7d7" />
<rect x="876" y="796" width="1" height="15" fill="#d7d7d7" />
<rect x="905" y="796" width="1" height="15" fill="#d7d7d7" />
<rect x="941" y="796" width="1" height="15" fill="#d7d7d7" />
</svg>
</body></html>
